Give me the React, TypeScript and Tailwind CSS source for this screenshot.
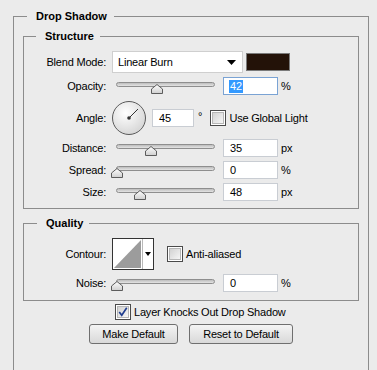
import React from "react";

const font = { fontFamily: '"Liberation Sans", Arial, sans-serif' };

const Thumb = ({ left }: { left: number }) => (
  <svg
    className="absolute top-[2px]"
    style={{ left: left - 6 }}
    width="12"
    height="10"
    viewBox="0 0 12 10"
  >
    <defs>
      <linearGradient id="thumbGrad" x1="0" y1="0" x2="0" y2="1">
        <stop offset="0" stopColor="#ffffff" />
        <stop offset="1" stopColor="#cfcfcf" />
      </linearGradient>
    </defs>
    <path
      d="M6 0.5 L11.5 5 L11.5 9.5 L0.5 9.5 L0.5 5 Z"
      fill="url(#thumbGrad)"
      stroke="#5c5c5c"
      strokeWidth="1"
    />
  </svg>
);

const Slider = ({ pos }: { pos: number }) => (
  <div className="relative w-[99px] h-[13px] shrink-0">
    <div className="absolute left-0 right-0 top-[0px] h-[5px] rounded-full border border-[#8e8e8e] bg-gradient-to-b from-[#bdbdbd] to-[#e4e4e4]" />
    <Thumb left={pos} />
  </div>
);

const Label = ({ children }: { children: React.ReactNode }) => (
  <div className="w-[82px] shrink-0 text-right text-[11px] tracking-[-0.2px] leading-none text-black">
    {children}
  </div>
);

const NumBox = ({
  value,
  selected,
  width = "w-[55px]",
}: {
  value: string;
  selected?: boolean;
  width?: string;
}) => (
  <div
    className={`${width} h-[18px] shrink-0 bg-white border ${
      selected ? "border-[#7aa3d4]" : "border-[#c9cdd3]"
    } flex items-center pl-[5px] text-[11px]`}
  >
    {selected ? (
      <span className="bg-[#3399ff] text-white px-[1px] leading-[13px]">
        {value}
      </span>
    ) : (
      <span className="text-black px-[1px]">{value}</span>
    )}
  </div>
);

const Check = ({ checked }: { checked?: boolean }) => (
  <div className="w-[16px] h-[16px] shrink-0 border border-[#4a4a4a] bg-white p-[1px]">
    <div className="w-full h-full border border-[#b6b6b6] bg-gradient-to-br from-[#d2d2d2] to-[#f6f6f6] flex items-center justify-center">
      {checked && (
        <svg width="12" height="12" viewBox="0 0 12 12">
          <path
            d="M1.5 6 L4.5 10 L10.5 1"
            fill="none"
            stroke="#1f3d8f"
            strokeWidth="2"
          />
        </svg>
      )}
    </div>
  </div>
);

const AngleDial = () => (
  <svg width="36" height="36" viewBox="0 0 36 36" className="shrink-0">
    <defs>
      <radialGradient id="dialGrad" cx="0.4" cy="0.35" r="0.7">
        <stop offset="0" stopColor="#ffffff" />
        <stop offset="1" stopColor="#d4d4d4" />
      </radialGradient>
    </defs>
    <circle cx="18" cy="18" r="16.5" fill="url(#dialGrad)" stroke="#5a5a5a" />
    <line x1="18" y1="18" x2="27" y2="9" stroke="#333" strokeWidth="1" />
    <circle cx="18" cy="18" r="1.8" fill="#333" />
  </svg>
);

const ContourPicker = () => (
  <div className="w-[42px] h-[32px] shrink-0 border border-[#333] bg-white flex">
    <svg width="29" height="30" viewBox="0 0 29 30">
      <polygon points="1,29 28,1 28,29" fill="#9c9c9c" />
    </svg>
    <div className="flex-1 border-l border-[#b8b8b8] flex items-center justify-center">
      <svg width="6" height="4" viewBox="0 0 6 4">
        <polygon points="0,0 6,0 3,4" fill="#000" />
      </svg>
    </div>
  </div>
);

const Button = ({ children, width }: { children: React.ReactNode; width: string }) => (
  <div
    className={`${width} h-[20px] rounded-[3px] border border-[#6f6f6f] bg-gradient-to-b from-[#f4f4f4] to-[#d9d9d9] flex items-center justify-center text-[11px] tracking-[-0.2px] text-black`}
  >
    {children}
  </div>
);

export default function App() {
  return (
    <div className="w-[377px] h-[370px] bg-[#ebebeb] overflow-hidden" style={font}>
      <fieldset className="ml-[13px] mt-[9px] w-[356px] h-[400px] border border-[#8c8c8c] px-[9px]">
        <legend className="ml-[4px] pl-[9px] pr-[7px] text-[11px] font-bold leading-[14px] text-black">
          Drop Shadow
        </legend>

        {/* Structure */}
        <fieldset className="mt-[6px] border border-[#8c8c8c] pt-[8px] pb-[7px]">
          <legend className="ml-[12px] pl-[9px] pr-[6px] text-[11px] font-bold leading-[14px] text-black">
            Structure
          </legend>

          <div className="flex items-center h-[22px]">
            <Label>Blend Mode:</Label>
            <div className="ml-[6px] w-[131px] h-[22px] bg-white border border-[#cfcfcf] flex items-center pl-[5px] pr-[6px] text-[11px] tracking-[-0.2px]">
              <span className="flex-1">Linear Burn</span>
              <svg width="9" height="5" viewBox="0 0 9 5">
                <polygon points="0,0 9,0 4.5,5" fill="#000" />
              </svg>
            </div>
            <div className="ml-[3px] w-[44px] h-[18px] border border-[#7a7a7a] bg-[#231208]" />
          </div>

          <div className="flex items-center mt-[4px] h-[18px]">
            <Label>Opacity:</Label>
            <div className="ml-[10px] mt-[4px]">
              <Slider pos={41} />
            </div>
            <div className="ml-[8px]">
              <NumBox value="42" selected />
            </div>
            <span className="ml-[3px] text-[11px]">%</span>
          </div>

          <div className="flex items-center mt-[5px] h-[36px]">
            <Label>Angle:</Label>
            <div className="ml-[5px]">
              <AngleDial />
            </div>
            <div className="ml-[5px]">
              <NumBox value="45" width="w-[42px]" />
            </div>
            <span className="ml-[4px] mb-[4px] text-[11px]">°</span>
            <div className="ml-[8px]">
              <Check />
            </div>
            <span className="ml-[3px] text-[11px] tracking-[-0.2px]">Use Global Light</span>
          </div>

          <div className="flex items-center mt-[3px] h-[18px]">
            <Label>Distance:</Label>
            <div className="ml-[10px] mt-[4px]">
              <Slider pos={35} />
            </div>
            <div className="ml-[8px]">
              <NumBox value="35" />
            </div>
            <span className="ml-[3px] text-[11px]">px</span>
          </div>

          <div className="flex items-center mt-[4px] h-[18px]">
            <Label>Spread:</Label>
            <div className="ml-[10px] mt-[4px]">
              <Slider pos={1} />
            </div>
            <div className="ml-[8px]">
              <NumBox value="0" />
            </div>
            <span className="ml-[3px] text-[11px]">%</span>
          </div>

          <div className="flex items-center mt-[4px] h-[18px]">
            <Label>Size:</Label>
            <div className="ml-[10px] mt-[4px]">
              <Slider pos={24} />
            </div>
            <div className="ml-[8px]">
              <NumBox value="48" />
            </div>
            <span className="ml-[3px] text-[11px]">px</span>
          </div>
        </fieldset>

        {/* Quality */}
        <fieldset className="mt-[7px] border border-[#8c8c8c] pt-[8px] pb-[8px]">
          <legend className="ml-[13px] pl-[9px] pr-[6px] text-[11px] font-bold leading-[14px] text-black">
            Quality
          </legend>

          <div className="flex items-center h-[32px]">
            <Label>Contour:</Label>
            <div className="ml-[6px]">
              <ContourPicker />
            </div>
            <div className="ml-[13px]">
              <Check />
            </div>
            <span className="ml-[3px] text-[11px] tracking-[-0.2px]">Anti-aliased</span>
          </div>

          <div className="flex items-center mt-[4px] h-[18px]">
            <Label>Noise:</Label>
            <div className="ml-[10px] mt-[4px]">
              <Slider pos={1} />
            </div>
            <div className="ml-[8px]">
              <NumBox value="0" />
            </div>
            <span className="ml-[3px] text-[11px]">%</span>
          </div>
        </fieldset>

        <div className="flex items-center mt-[3px] ml-[92px] h-[16px]">
          <Check checked />
          <span className="ml-[3px] text-[11px] tracking-[-0.2px]">Layer Knocks Out Drop Shadow</span>
        </div>

        <div className="flex justify-center gap-[11px] mt-[4px]">
          <Button width="w-[89px]">Make Default</Button>
          <Button width="w-[104px]">Reset to Default</Button>
        </div>
      </fieldset>
    </div>
  );
}
